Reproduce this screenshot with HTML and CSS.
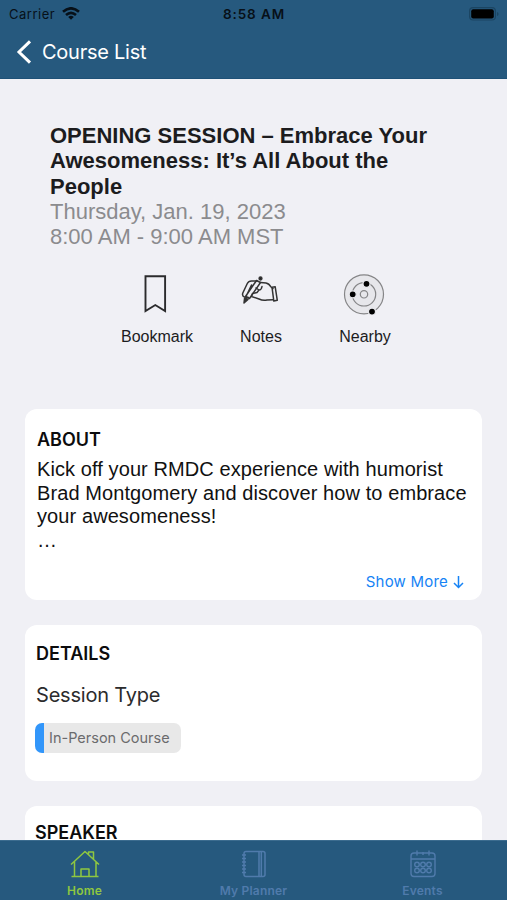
FILE: index.html
```html
<!DOCTYPE html>
<html lang="en">
<head>
<meta charset="utf-8">
<title>Course List</title>
<link rel="stylesheet" href="styles.css">
</head>
<body>
<header class="header">
  <div class="status">
    <div class="carrier">
      <span>Carrier</span>
      <svg width="18" height="13" viewBox="0 0 18 13" fill="none" stroke="#071018" stroke-width="2.6"><path d="M1 4.8Q9-2.2 17 4.8M4 8Q9 3.6 14 8"/><path d="M6.2 9.9Q9 7.6 11.8 9.9L9 12.8Z" fill="#071018" stroke="none"/></svg>
    </div>
    <span class="clock">8:58 AM</span>
    <svg class="battery" width="30" height="14" viewBox="0 0 30 14"><rect x=".6" y=".6" width="25.8" height="12.4" rx="3.5" fill="none" stroke="#1b4562" stroke-width="1.2"/><rect x="2.2" y="2.2" width="22.6" height="9.2" rx="2" fill="#000"/><path d="M28 5v4q1.6-.6 1.6-2T28 5" fill="#1b4562"/></svg>
  </div>
  <nav class="nav">
    <svg width="16" height="24" viewBox="0 0 16 24" fill="none" stroke="#fff" stroke-width="3"><path d="M14 1.3 3 12l11 10.7"/></svg>
    <span>Course List</span>
  </nav>
</header>
<main class="main">
  <section class="intro">
    <h1 class="title">OPENING SESSION – Embrace Your<br>Awesomeness: It’s All About the<br>People</h1>
    <p class="when">Thursday, Jan. 19, 2023<br>8:00 AM - 9:00 AM MST</p>
  </section>
  <div class="actions">
    <div class="action">
      <svg width="42" height="42" viewBox="0 0 42 42" fill="none" stroke="#2b2b2d" stroke-width="1.9"><path d="M10.5 3.2h19.6v34.800L20.300 32 10.500 38Z"/></svg>
      <span>Bookmark</span>
    </div>
    <div class="action">
      <svg width="42" height="42" viewBox="0 0 42 42" fill="none" stroke="#333" stroke-width="1.5" stroke-linejoin="round" stroke-linecap="round">
        <path d="M18 8H12.500Q9.500 8 8.300 10.500L3.800 20Q2.800 23 5.500 24L9.500 24.500"/>
        <path d="M12.500 12 7.500 22.500M17.500 7.500 21.500 9.500 10.500 25.500 6.500 23.500Z"/>
        <path d="M5.600 25 5 30 9 26.500Z" fill="#333"/>
        <circle cx="21.500" cy="5.500" r="1.400" fill="#222"/>
        <path d="M21.500 9.500 27 10Q30 10.500 32 14L34 15.500M17 15 20 17Q22.500 17 23 13.500M20 17 18 19.500 13.500 20.500 12.500 23.500 20 26Q24 28 28 27L34 26.800"/>
        <path d="M33 14.200 36.200 13.800 38.300 27.300 34.800 28Z"/>
      </svg>
      <span>Notes</span>
    </div>
    <div class="action">
      <svg width="42" height="42" viewBox="0 0 42 42" fill="none" stroke="#858587" stroke-width="1.200"><circle cx="21" cy="21.300" r="19.500" fill="#e7e7eb"/><circle cx="21" cy="21.300" r="11.700"/><circle cx="21" cy="21.300" r="3.700"/><g fill="#000" stroke="#e7e7eb"><circle cx="23.500" cy="10.800" r="3.500"/><circle cx="9.700" cy="21.300" r="3.500"/><circle cx="29" cy="38.600" r="3.500"/></g></svg>
      <span>Nearby</span>
    </div>
  </div>
  <section class="card about">
    <h2>ABOUT</h2>
    <p class="copy">Kick off your RMDC experience with humorist<br>Brad Montgomery and discover how to embrace<br>your awesomeness!<br>…</p>
    <a class="more"><span>Show More</span><svg width="11" height="14" viewBox="0 0 11 14" fill="none" stroke="#1683f5" stroke-width="1.500"><path d="M5.500 1v11.500M1 8l4.500 4.500L10 8"/></svg></a>
  </section>
  <section class="card details">
    <h2>DETAILS</h2>
    <h3 class="type">Session Type</h3>
    <div class="chip">In-Person Course</div>
  </section>
  <section class="card speaker"><h2>SPEAKER</h2></section>
</main>
<footer class="tabs">
  <div class="tab active">
    <svg width="32" height="30" viewBox="0 0 32 30" fill="none" stroke="currentColor" stroke-width="1.500" stroke-linejoin="round"><path d="M2 15.500 16 2.500 30 15.500M5.500 12.500V27.500M27 13V27.500M2.500 27.500H29.500M12 27.500V20h8v7.500M19.500 5.500V3h5v7.500"/></svg>
    <span>Home</span>
  </div>
  <div class="tab planner">
    <svg width="32" height="30" viewBox="0 0 32 30" fill="none" stroke="currentColor" stroke-width="1.500"><rect x="6" y="2.500" width="21" height="25" rx="2"/><path d="M21 2.500v25M23.300 2.500v25M4 6h4M4 9.500h4M4 13h4M4 16.500h4M4 20h4M4 23.500h4"/></svg>
    <span>My Planner</span>
  </div>
  <div class="tab">
    <svg width="32" height="30" viewBox="0 0 32 30" fill="none" stroke="currentColor" stroke-width="1.400"><rect x="4" y="4" width="24" height="23.500" rx="3"/><path d="M4 10h24M10 1.500v5M22 1.500v5M16 3v3"/><g><circle cx="10" cy="15.500" r="2.300"/><circle cx="16" cy="15.500" r="2.300"/><circle cx="22" cy="15.500" r="2.300"/><circle cx="10" cy="21.500" r="2.300"/><circle cx="16" cy="21.500" r="2.300"/><circle cx="22" cy="21.500" r="2.300"/></g></svg>
    <span>Events</span>
  </div>
</footer>
</body>
</html>
```
FILE: styles.css
```css
* { box-sizing: border-box; }
body { margin: 0; height: 900px; display: flex; flex-direction: column; overflow: hidden; background: #f0f0f5; color: #1c1c1e; font-family: "Liberation Sans", Arial, sans-serif; white-space: nowrap; }
h1, h2, h3, p { margin: 0; }
svg { display: block; flex: none; }
.header { height: 79px; flex: none; background: #26597e; border-bottom: 1px solid #1e5177; font-family: Inter, sans-serif; }
.status { height: 27px; display: grid; grid-template-columns: 1fr auto 1fr; align-items: center; padding: 0 8px 0 9px; font-size: 13px; color: #071018; }
.carrier { display: flex; align-items: center; gap: 7px; letter-spacing: .5px; }
.clock { font-size: 13.500px; font-weight: 600; letter-spacing: .9px; }
.battery { justify-self: end; }
.nav { display: flex; align-items: center; height: 50px; padding-left: 16px; gap: 10px; color: #fff; font-size: 20px; letter-spacing: -.25px; }
.main { height: 761px; flex: none; overflow: hidden; padding: 44px 25px 0; }
.intro { padding-left: 25px; font-size: 22px; line-height: 25.300px; }
.title { font-size: 22px; line-height: 25.300px; font-weight: 700; }
.when { color: #8b8b8e; }
.actions { display: grid; grid-template-columns: repeat(3, 104px); margin-left: 80px; margin-top: 24px; height: 74px; font-size: 16px; }
.action { display: flex; flex-direction: column; align-items: center; gap: 13px; }
.action svg { margin-left: -3px; }
.card { background: #fff; border-radius: 12px; }
.about { height: 191px; margin-top: 62px; padding: 20px 12px 0; display: flex; flex-direction: column; }
h2 { font-family: Inter, sans-serif; font-size: 18px; line-height: 22px; font-weight: 600; color: #0c0c0d; }
.copy { margin-top: 7px; font-size: 20px; line-height: 23.500px; letter-spacing: .09px; color: #111; }
.more { display: flex; align-items: center; align-self: flex-end; gap: 5px; margin: 20px 6px 0 0; font: 15px/20px Inter, sans-serif; letter-spacing: .2px; color: #1683f5; }
.details { margin-top: 25px; height: 156px; padding: 18px 11px 0; }
.type { font: 400 20px/24px Inter, sans-serif; letter-spacing: -.2px; margin-top: 18px; color: #2b2b2d; }
.chip { width: 146px; height: 30px; margin: 16px 0 0 -1px; padding-left: 14px; border-radius: 7px; background: linear-gradient(to right, #3296fa 9px, #e8e8e8 9px); font: 14.500px/30px Inter, sans-serif; color: #6b6b6d; }
.speaker { height: 80px; margin-top: 25px; padding: 16px 10px; }
.tabs { height: 60px; flex: none; display: grid; grid-template-columns: repeat(3, 1fr); background: #26597e; border-top: 1px solid #3c6c8f; color: #507bac; font: 600 12px/16px Inter, sans-serif; }
.tab { display: flex; flex-direction: column; align-items: center; padding-top: 8px; gap: 4px; letter-spacing: .2px; }
.active { color: #8fc740; }
```
